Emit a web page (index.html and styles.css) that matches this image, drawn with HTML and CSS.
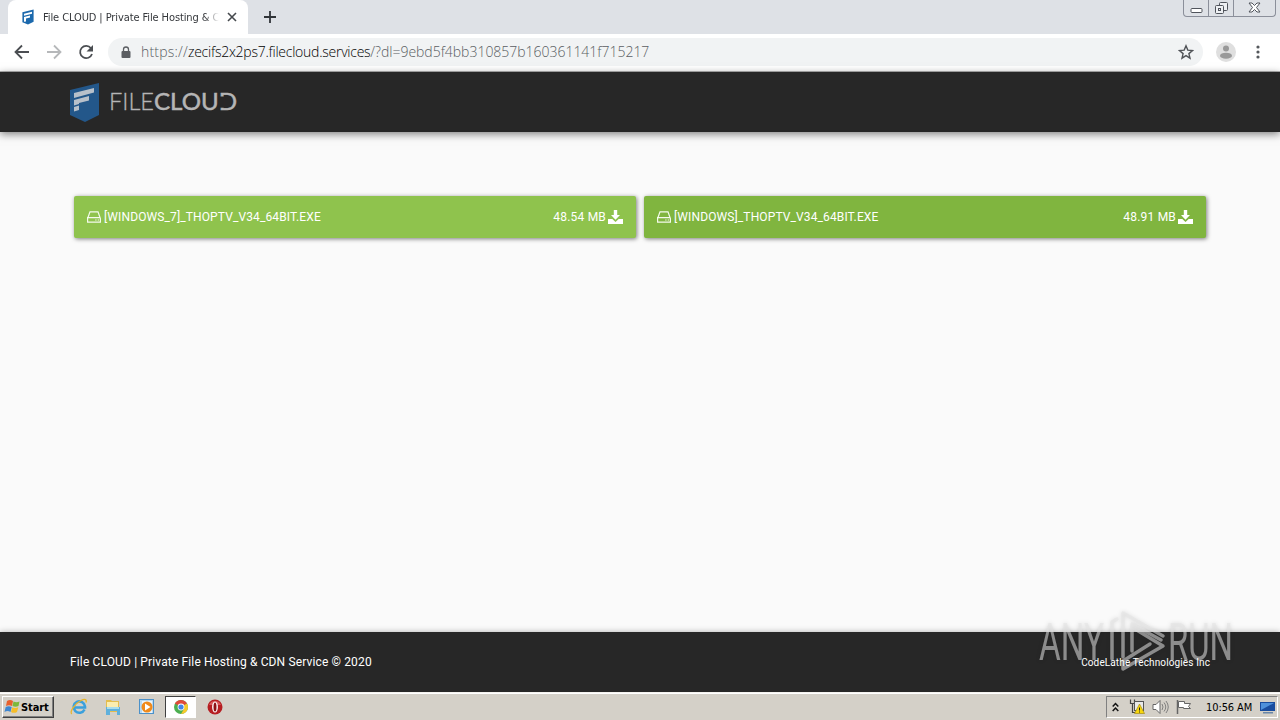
FILE: index.html
```html
<!DOCTYPE html>
<html lang="en">
<head>
  <meta charset="UTF-8">
  <meta name="viewport" content="width=device-width, initial-scale=1.0">
  <title>File CLOUD | Private File Hosting &amp; CDN Service</title>
  <link rel="stylesheet" href="styles.css">
</head>
<body>
  <div class="tab-strip">
    <div class="tab">
      <svg class="favicon" width="14" height="16" viewBox="0 0 30 40">
        <path fill="#1c69ad" d="M1 8 29 1v31L15 39 1 33z"/>
        <path fill="#fff" d="M5 12l20-5v5L5 17zM5 20l15-4v5L10 24v7l-5 1z"/>
      </svg>
      <span class="tab-title">File CLOUD | Private File Hosting &amp; C</span>
      <svg class="tab-close" width="10" height="10" viewBox="0 0 10 10"><path d="M1 1l8 8M9 1L1 9" stroke="#45494d" stroke-width="1.600"/></svg>
    </div>
    <svg class="new-tab" width="12" height="12" viewBox="0 0 12 12"><path d="M6 0v12M0 6h12" stroke="#303439" stroke-width="1.800"/></svg>
    <div class="window-buttons">
      <span class="win-btn"><svg width="13" height="14" viewBox="0 0 13 14"><rect x="1" y="8.500" width="11" height="4" rx="1" fill="#fff" stroke="#50545c"/></svg></span>
      <span class="win-btn"><svg width="13" height="15" viewBox="0 0 13 15"><g fill="#eef0f3" stroke="#50545c"><rect x="4.500" y="2.500" width="8" height="8" rx="1"/><rect x=".5" y="5.500" width="8" height="8" rx="1"/><rect x="3.500" y="8.500" width="2" height="2"/></g></svg></span>
      <span class="win-btn wide"><svg width="13" height="14" viewBox="0 0 13 14"><path d="M1 3h3l2.500 2.500L9 3h3L8.500 7.500 12 12H9L6.500 9.500 4 12H1l3.500-4.500z" fill="#fff" stroke="#50545c"/></svg></span>
    </div>
  </div>

  <div class="toolbar">
    <svg class="nav-back" width="16" height="16" viewBox="0 0 16 16"><path d="M15 8H2M8 1.500L1.500 8 8 14.500" fill="none" stroke="#4b4e52" stroke-width="1.800"/></svg>
    <svg class="nav-forward" width="16" height="16" viewBox="0 0 16 16"><path d="M1 8h13M8 1.500L14.500 8 8 14.500" fill="none" stroke="#b6b8ba" stroke-width="1.800"/></svg>
    <svg class="nav-reload" width="16" height="16" viewBox="0 0 16 16"><path d="M13 4.200A6.100 6.100 0 1 0 14 10" fill="none" stroke="#4b4e52" stroke-width="1.800"/><path d="M15 1v6.500H8.500z" fill="#4b4e52"/></svg>
    <div class="address-bar">
      <svg width="10" height="13" viewBox="0 0 10 13"><rect x="0.500" y="5" width="9" height="7" rx="1" fill="#5b5e62"/><path d="M2.500 5V3.500a2.500 2.500 0 0 1 5 0V5" fill="none" stroke="#5b5e62" stroke-width="1.300"/></svg>
      <span class="url"><span class="url-scheme">https://</span><span class="url-host">zecifs2x2ps7.filecloud.services</span><span class="url-path">/?dl=9ebd5f4bb310857b160361141f715217</span></span>
      <svg class="star" width="16" height="16" viewBox="0 0 16 16"><path d="M8 1.800l1.800 4.300 4.700.4-3.600 3.100 1.100 4.600L8 11.700l-4 2.500 1.100-4.600L1.500 6.500l4.700-.4z" fill="none" stroke="#505357" stroke-width="1.400"/></svg>
    </div>
    <svg class="avatar" width="20" height="20" viewBox="0 0 20 20"><circle cx="10" cy="10" r="10" fill="#dfdfdf"/><circle cx="10" cy="6.500" r="3" fill="#999"/><ellipse cx="10" cy="13.700" rx="6" ry="3" fill="#999"/></svg>
    <svg class="menu" width="4" height="14" viewBox="0 0 4 14" fill="#55585c"><circle cx="2" cy="2" r="1.600"/><circle cx="2" cy="7" r="1.600"/><circle cx="2" cy="12" r="1.600"/></svg>
  </div>

  <header class="site-header">
    <svg class="shield" width="30" height="40" viewBox="0 0 30 40">
      <path fill="#23578a" d="M0 8 29 1v32L15 40 0 33z"/>
      <path fill="#b7c0ca" d="M4 11l20-5v4.500L4 16zM4 18l15-4v4.500L9 21v1l-5 1.500zM4 25l5-1.500V28l-5 1.500z"/>
    </svg>
    <svg class="wordmark" width="130" height="30" viewBox="0 0 130 30">
      <text class="word-thin" x="-1" y="23" textLength="45" lengthAdjust="spacingAndGlyphs">FILE</text>
      <text class="word-bold" x="44" y="23" textLength="83" lengthAdjust="spacingAndGlyphs">CLOUD</text>
      <rect x="110" y="9.500" width="4.500" height="11.200" fill="#272727"/>
    </svg>
  </header>

  <main class="downloads">
    <a class="download light">
      <svg width="14" height="12" viewBox="0 0 14 12"><path d="M.6 7.500L3 .9h8l2.400 6.600v3.600H.6V6.700h12.800" fill="none" stroke="#f4faec" stroke-width="1.200"/><path d="M8.300 9h1.200M10.700 9h1.200" stroke="#fff" stroke-width="1.200"/></svg>
      <span class="file-name">[WINDOWS_7]_THOPTV_V34_64BIT.EXE</span>
      <span class="file-size">48.54 MB</span>
      <svg class="save" width="15" height="15" viewBox="0 0 15 15" fill="#fff"><path d="M5.800 0h3.400v5H12L7.500 9.800 3 5h2.800z"/><path d="M0 9h4.300l3.200 3 3.200-3H15v5H0z"/></svg>
    </a>
    <a class="download dark">
      <svg width="14" height="12" viewBox="0 0 14 12"><path d="M.6 7.500L3 .9h8l2.400 6.600v3.600H.6V6.700h12.800" fill="none" stroke="#f4faec" stroke-width="1.200"/><path d="M8.300 9h1.200M10.700 9h1.200" stroke="#fff" stroke-width="1.200"/></svg>
      <span class="file-name">[WINDOWS]_THOPTV_V34_64BIT.EXE</span>
      <span class="file-size">48.91 MB</span>
      <svg class="save" width="15" height="15" viewBox="0 0 15 15" fill="#fff"><path d="M5.800 0h3.400v5H12L7.500 9.800 3 5h2.800z"/><path d="M0 9h4.300l3.200 3 3.200-3H15v5H0z"/></svg>
    </a>
  </main>

  <footer class="site-footer">
    <span class="copyright">File CLOUD | Private File Hosting &amp; CDN Service © 2020</span>
    <span class="company">CodeLathe Technologies Inc</span>
  </footer>

  <div class="taskbar">
    <div class="start">
      <svg width="17" height="16" viewBox="0 0 17 16"><path d="M3 2q3-2 6 0L8 7Q5 5.500 2 7z" fill="#e8602c"/><path d="M9.500 2.500q3 1.500 6 0L14.500 7q-3 1.500-6 0z" fill="#7cb83a"/><path d="M1.700 8q3-1.500 6 0l-1.200 5q-3-2-6 0z" fill="#3e86d0"/><path d="M8.300 8.200q2.700 1.500 6 0L13 13q-3 1.700-6 0z" fill="#f6bd28"/></svg>
      <span>Start</span>
    </div>
    <div class="quick-launch">
      <span class="task-item"><svg width="18" height="18" viewBox="0 0 18 18"><path d="M14.500 11.500A5.700 5.700 0 1 1 15 8.500v1H5" fill="none" stroke="#3ba0dc" stroke-width="2.600"/><path d="M2 16C-1 15 4 6 11 2.500c4-2 6-1 5 2" fill="none" stroke="#e7b52d" stroke-width="1.300"/></svg></span>
      <span class="task-item"><svg width="18" height="18" viewBox="0 0 18 18"><path d="M2 2h5l1 1h7v11H2z" fill="#e4bd4e"/><path d="M3 4h11v5H3z" fill="#fbedb0"/><path d="M2 9h14v8h-3v-4H6v4H2z" fill="#5fb0dc"/><path d="M3 9h12v2H3z" fill="#a8dced"/></svg></span>
      <span class="task-item"><svg width="18" height="18" viewBox="0 0 18 18"><rect x="1.500" y="1.500" width="14" height="14" fill="#b7d9f2" stroke="#4c91c9"/><rect x="4" y="3" width="10" height="12" fill="#eaf4fb"/><circle cx="9" cy="9" r="5.500" fill="#f08a1b"/><path d="M7 5.500L12.500 9 7 12.500z" fill="#fff"/></svg></span>
      <span class="task-item active"><svg width="14" height="14" viewBox="0 0 14 14"><circle cx="7" cy="7" r="7" fill="#4caf50"/><path d="M7 7L.9 3.500A7 7 0 0 1 13 3.500z" fill="#e04a3a"/><path d="M7 7L13 3.500A7 7 0 0 1 7 14l3-5z" fill="#f8c92b"/><circle cx="7" cy="7" r="3.400" fill="#fff"/><circle cx="7" cy="7" r="2.600" fill="#4286e8"/></svg></span>
      <span class="task-item"><svg width="16" height="16" viewBox="0 0 16 16"><circle cx="8" cy="8" r="7.500" fill="#b61e22"/><path d="M2 6a6.500 6.500 0 0 1 12 0z" fill="#d9595a"/><ellipse cx="8" cy="8" rx="2.900" ry="5.500" fill="#fff"/><ellipse cx="8" cy="8" rx="1.500" ry="4.500" fill="#8e1114"/></svg></span>
    </div>
    <div class="tray">
      <svg class="chevrons" width="7" height="10" viewBox="0 0 7 10"><path d="M.7 4.500l2.800-3 2.800 3M.7 9l2.800-3 2.800 3" fill="none" stroke="#111" stroke-width="1.500"/></svg>
      <svg class="network" width="16" height="16" viewBox="0 0 16 16"><path d="M1.500.5v4h4v-4M3.500 4.500v9h3" fill="none" stroke="#444" stroke-width="1.200"/><rect x="5.500" y="2.500" width="9" height="9" fill="#e9e9e9" stroke="#555"/><path d="M10.500 5L15.500 14.500h-10z" fill="#f7d60d" stroke="#a48b14" stroke-width=".7"/><path d="M10.500 8.500v3M10.500 12.500v1" stroke="#222"/></svg>
      <svg class="sound" width="17" height="14" viewBox="0 0 17 14"><path d="M1 4.500h3l4-4v13l-4-4H1z" fill="#fff" stroke="#666"/><path d="M10 4q2 3 0 6M12 2.500q3.500 4.500 0 9M14 1q4.500 6 0 12" fill="none" stroke="#777" stroke-width=".9"/></svg>
      <svg class="flag" width="16" height="14" viewBox="0 0 16 14"><path d="M1.500 0v14" stroke="#666" stroke-width="1.500"/><path d="M2.500 1.500h6v2h6l-2 3 2 2h-7v-1h-5z" fill="#fff" stroke="#666"/></svg>
      <span class="clock">10:56 AM</span>
      <svg class="desktop" width="16" height="13" viewBox="0 0 16 13"><path d="M0 1h15v9H0z" fill="#194d9f"/><path d="M1 2h13L1 9z" fill="#4e91db"/><path d="M3 11h10v1.500H3z" fill="#6986a8"/></svg>
    </div>
  </div>

  <!-- Watermark floats over the footer edge -->
  <svg class="watermark" width="210" height="70" viewBox="0 0 210 70">
    <g class="mark-text">
      <text x="8" y="55" textLength="65" lengthAdjust="spacingAndGlyphs">ANY</text>
      <text x="137" y="55" textLength="65" lengthAdjust="spacingAndGlyphs">RUN</text>
    </g>
    <g class="mark-lines">
      <path d="M81 54V17l5-3"/>
      <path d="M101 46V19M92 52V8l40 23M101 19l29 16"/>
      <path d="M119 39L92 56v8l40-23-28-17"/>
    </g>
  </svg>
</body>
</html>
```

FILE: styles.css
```css
* {
  margin: 0;
  padding: 0;
  box-sizing: border-box;
}

body {
  width: 1280px;
  height: 720px;
  overflow: hidden;
  display: flex;
  flex-direction: column;
  background-color: #fafafa;
  font-family: Roboto, "Liberation Sans", sans-serif;
}

svg {
  display: block;
  flex-shrink: 0;
}

/* Browser chrome */
.tab-strip {
  height: 34px;
  display: flex;
  align-items: flex-start;
  background: #dee1e6;
  padding-left: 8px;
}

.tab {
  width: 240px;
  height: 34px;
  display: flex;
  align-items: center;
  padding-left: 13px;
  background: #fff;
  border-radius: 8px 8px 0 0;
}

.tab-title {
  width: 176px;
  margin-left: 8px;
  white-space: nowrap;
  font-family: "DejaVu Sans Condensed", "DejaVu Sans", sans-serif;
  font-stretch: condensed;
  font-size: 11px;
  letter-spacing: -0.1px;
  color: #34373b;
  -webkit-mask-image: linear-gradient(to right, #000 92%, transparent);
  mask-image: linear-gradient(to right, #000 92%, transparent);
}

.tab-close {
  margin-left: 8px;
}

.new-tab {
  margin: 11px 0 0 16px;
}

.window-buttons {
  height: 17px;
  display: flex;
  margin-left: auto;
  margin-right: 4px;
  border: 1px solid #8b8f9a;
  border-top: 0;
  border-radius: 0 0 4px 4px;
}

.win-btn {
  width: 25px;
  display: flex;
  justify-content: center;
  border-right: 1px solid #8b8f9a;
}

.win-btn.wide {
  width: 41px;
  border-right: 0;
}

.toolbar {
  height: 38px;
  display: flex;
  align-items: center;
  padding: 0 20px 1px 14px;
  background: #fff;
  border-bottom: 1px solid #b5b5b5;
}

.nav-forward,
.nav-reload {
  margin-left: 16px;
}

.address-bar {
  width: 1095px;
  height: 28px;
  display: flex;
  align-items: center;
  margin-left: 14px;
  padding: 0 9px 0 13px;
  background: #f1f3f4;
  border-radius: 14px;
}

.url {
  margin-left: 10px;
  padding-bottom: 2px;
  white-space: nowrap;
  font-family: "Open Sans", "Noto Sans", sans-serif;
  font-weight: 300;
  font-size: 14px;
  color: #5a5e63;
}

.url-scheme {
  letter-spacing: 0.2px;
}

.url-host {
  color: #000;
  letter-spacing: -0.25px;
}

.url-path {
  letter-spacing: -0.02px;
}

.star {
  margin-left: auto;
}

.avatar {
  margin-left: 13px;
}

.menu {
  margin-left: 20px;
}

/* Page */
.site-header {
  height: 60px;
  display: flex;
  align-items: center;
  padding-left: 70px;
  background: #272727;
  box-shadow: 0 2px 8px rgba(0, 0, 0, 0.5);
}

.wordmark {
  margin-left: 10px;
}

.word-thin,
.word-bold {
  font-family: Lato, sans-serif;
  font-size: 23px;
  fill: #b5b5b5;
}

.word-thin {
  font-weight: 300;
  stroke: #b5b5b5;
  stroke-width: 0.3px;
}

.word-bold {
  font-weight: 400;
  stroke: #b5b5b5;
  stroke-width: 0.5px;
}

.downloads {
  flex: 1;
  display: flex;
  align-items: flex-start;
  gap: 8px;
  padding: 64px 74px 0;
}

.download {
  width: 562px;
  height: 42px;
  display: flex;
  align-items: center;
  padding: 0 13px;
  border-radius: 2px;
  color: #fff;
  font-size: 12px;
  white-space: nowrap;
  box-shadow: 1px 1px 4px rgba(0, 0, 0, 0.5);
}

.light {
  background: #8fc34d;
}

.dark {
  background: #80b53f;
}

.file-name {
  margin-left: 3px;
  letter-spacing: 0.12px;
}

.file-size {
  margin-left: auto;
  letter-spacing: 0.2px;
}

.save {
  margin-left: 2px;
}

.site-footer {
  height: 60px;
  display: flex;
  align-items: center;
  justify-content: space-between;
  padding: 0 70px;
  background: #272727;
  color: #fff;
  box-shadow: 0 0 6px rgba(0, 0, 0, 0.3);
}

.copyright {
  font-size: 12px;
  letter-spacing: 0.14px;
}

.company {
  position: relative;
  z-index: 2;
  font-size: 10px;
  letter-spacing: 0.12px;
}

/* Taskbar */
.taskbar {
  height: 28px;
  display: flex;
  align-items: center;
  padding: 1px 2px 0;
  background: #d4d0c8;
  border-top: 1px solid #f4f2ee;
  box-shadow: inset 0 1px 0 #fff;
}

.start {
  width: 52px;
  height: 22px;
  display: flex;
  align-items: center;
  padding-left: 1px;
  border: 1px solid;
  border-color: #fff #404040 #404040 #fff;
  box-shadow: inset -1px -1px 0 #808080;
  font-family: "DejaVu Sans Condensed", "DejaVu Sans", sans-serif;
  font-stretch: condensed;
  font-size: 11px;
  font-weight: bold;
  letter-spacing: -0.1px;
}

.quick-launch {
  display: flex;
  gap: 3px;
  margin-left: 9px;
}

.task-item {
  width: 31px;
  height: 22px;
  display: flex;
  align-items: center;
  justify-content: center;
}

.task-item.active {
  background: #fff;
  border: 1px solid;
  border-color: #404040 #fff #fff #404040;
}

.tray {
  width: 172px;
  height: 22px;
  display: flex;
  align-items: center;
  margin-left: auto;
  padding-left: 5px;
  border: 1px solid;
  border-color: #808080 #fff #fff #808080;
}

.network {
  margin-left: 10px;
}

.sound {
  margin-left: 7px;
}

.flag {
  margin-left: 7px;
}

.clock {
  width: 48px;
  margin-left: 14px;
  white-space: nowrap;
  font-family: "DejaVu Sans Condensed", "DejaVu Sans", sans-serif;
  font-stretch: condensed;
  font-size: 11px;
  letter-spacing: -0.1px;
}

.desktop {
  margin-left: 6px;
}

.watermark {
  position: absolute;
  left: 1031px;
  top: 605px;
  filter: drop-shadow(0 0 2px rgba(0, 0, 0, 0.2));
  pointer-events: none;
}

.mark-text {
  font-family: Roboto, sans-serif;
  font-size: 52px;
  font-weight: 400;
  fill: rgba(225, 225, 225, 0.55);
}

.mark-lines {
  fill: none;
  stroke: rgba(225, 225, 225, 0.55);
  stroke-width: 3.5;
  stroke-linejoin: round;
  stroke-linecap: round;
}
```
